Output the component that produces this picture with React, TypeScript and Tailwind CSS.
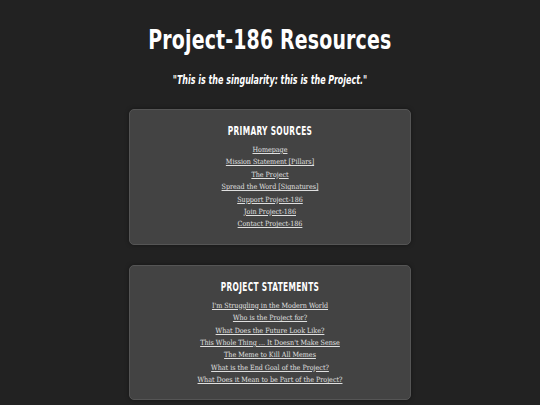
import React from 'react';

const primary = [
  'Homepage',
  'Mission Statement [Pillars]',
  'The Project',
  'Spread the Word [Signatures]',
  'Support Project-186',
  'Join Project-186',
  'Contact Project-186',
];

const statements = [
  "I'm Struggling in the Modern World",
  'Who is the Project for?',
  'What Does the Future Look Like?',
  "This Whole Thing ... It Doesn't Make Sense",
  'The Meme to Kill All Memes',
  'What is the End Goal of the Project?',
  'What Does it Mean to be Part of the Project?',
];

function Card({ title, links }: { title: string; links: string[] }) {
  return (
    <section className="w-[282px] rounded-[5px] border border-[#555] bg-[#434343] pt-[13px] pb-[17px] text-center shadow-[0_0_4px_rgba(0,0,0,0.4)]">
      <h2 className="scale-x-[0.66] font-['DejaVu_Sans',sans-serif] font-stretch-condensed text-[12.5px] leading-[16px] font-bold uppercase tracking-[0.5px] text-white">
        {title}
      </h2>
      <ul className="mt-[1px] flex flex-col items-center">
        {links.map((l) => (
          <li key={l} className="h-[12.4px] leading-[12.4px]">
            <a href="#" className="font-['DejaVu_Serif',serif] font-stretch-condensed text-[7.1px] text-[#e0e0e0] underline">
              {l}
            </a>
          </li>
        ))}
      </ul>
    </section>
  );
}

export default function App() {
  return (
    <div className="min-h-[405px] bg-[#222222] flex flex-col items-center">
      <h1 className="mt-[22px] scale-x-[0.78] font-['DejaVu_Sans',sans-serif] font-stretch-condensed text-[27px] leading-[36px] font-bold tracking-[0.2px] text-white">
        Project-186 Resources
      </h1>
      <p className="mt-[14px] scale-x-[0.71] font-['DejaVu_Sans',sans-serif] font-stretch-condensed text-[12.5px] leading-[16px] font-bold italic tracking-[0px] text-white">
        "This is the singularity: this is the Project."
      </p>
      <div className="mt-[21px] flex flex-col gap-[20px]">
        <Card title="Primary Sources" links={primary} />
        <Card title="Project Statements" links={statements} />
      </div>
    </div>
  );
}
